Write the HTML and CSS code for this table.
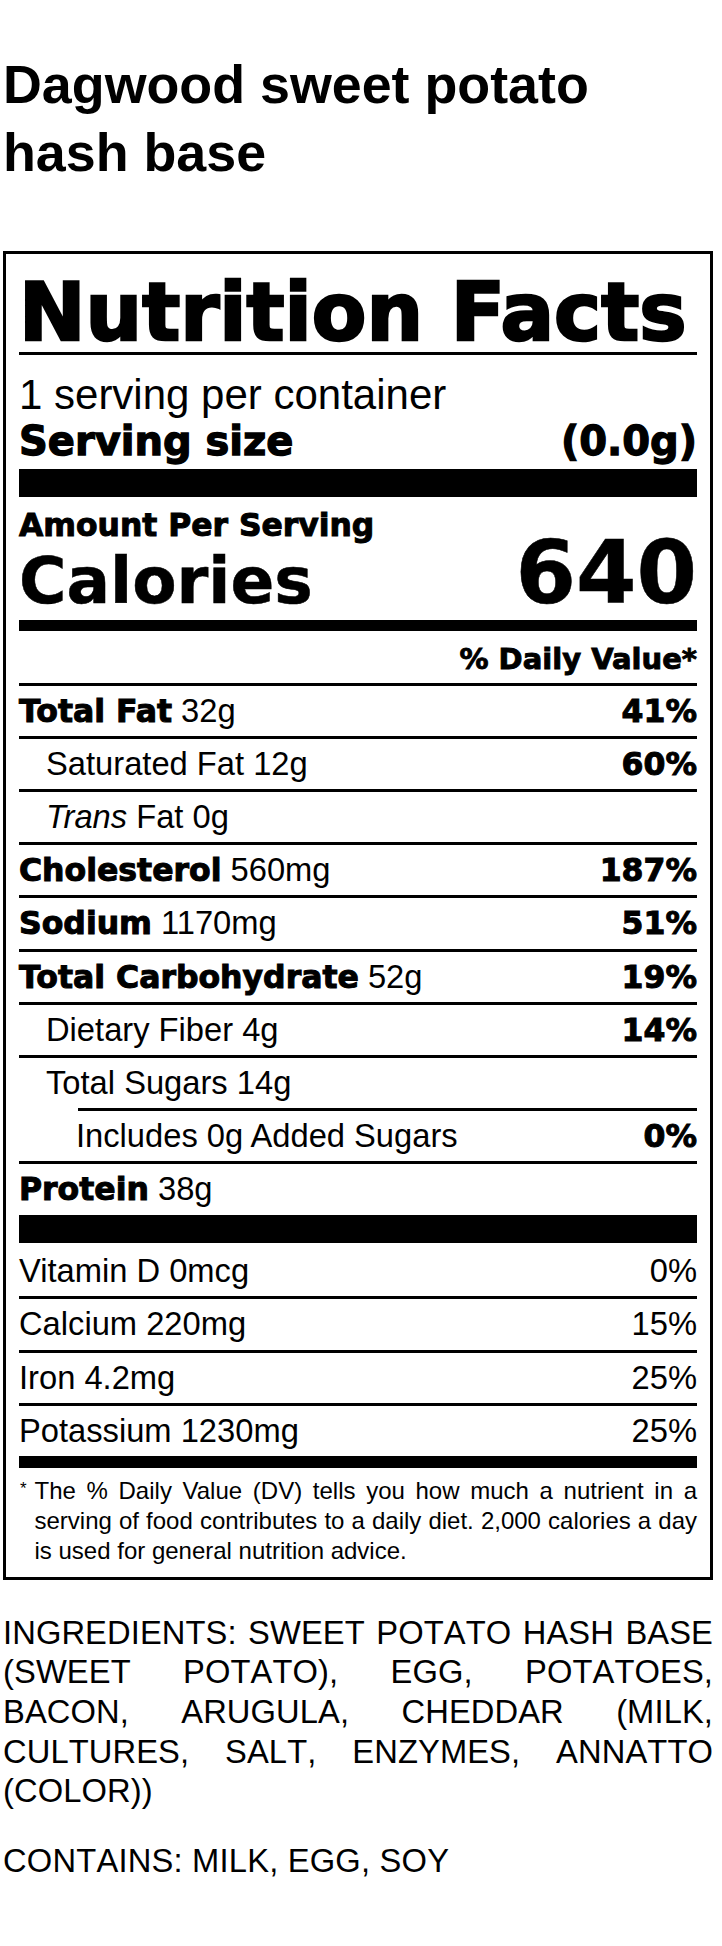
FILE: index.html
```html
<!DOCTYPE html>
<html lang="en">
<head>
<meta charset="utf-8">
<title>Dagwood sweet potato hash base</title>
<link rel="stylesheet" href="styles.css">
</head>
<body>
<div class="page">
  <h1 class="title">Dagwood sweet potato hash base</h1>
  <section class="label">
    <div class="nf-head heavy">Nutrition Facts</div>
    <div class="servings">1 serving per container</div>
    <div class="serving-size heavy"><span>Serving size</span><span>(0.0g)</span></div>
    <div class="bar bar-lg"></div>
    <div class="amount heavy">Amount Per Serving</div>
    <div class="calories heavy"><span class="cal-label">Calories</span><span class="cal-value">640</span></div>
    <div class="bar bar-md"></div>
    <div class="dv-head heavy">% Daily Value*</div>
    <div class="row"><span><b class="heavy">Total Fat</b> 32g</span><b class="heavy">41%</b></div>
    <div class="row indent"><span>Saturated Fat 12g</span><b class="heavy">60%</b></div>
    <div class="row indent"><span><i>Trans</i> Fat 0g</span></div>
    <div class="row"><span><b class="heavy">Cholesterol</b> 560mg</span><b class="heavy">187%</b></div>
    <div class="row"><span><b class="heavy">Sodium</b> 1170mg</span><b class="heavy">51%</b></div>
    <div class="row"><span><b class="heavy">Total Carbohydrate</b> 52g</span><b class="heavy">19%</b></div>
    <div class="row indent"><span>Dietary Fiber 4g</span><b class="heavy">14%</b></div>
    <div class="row indent"><span>Total Sugars 14g</span></div>
    <div class="row sub"><span>Includes 0g Added Sugars</span><b class="heavy">0%</b></div>
    <div class="row"><span><b class="heavy">Protein</b> 38g</span></div>
    <div class="bar bar-lg2"></div>
    <div class="row first"><span>Vitamin D 0mcg</span><span>0%</span></div>
    <div class="row"><span>Calcium 220mg</span><span>15%</span></div>
    <div class="row"><span>Iron 4.2mg</span><span>25%</span></div>
    <div class="row"><span>Potassium 1230mg</span><span>25%</span></div>
    <div class="bar bar-md2"></div>
    <div class="footnote"><span class="ast">*</span><p class="fn-text">The % Daily Value (DV) tells you how much a nutrient in a serving of food contributes to a daily diet. 2,000 calories a day is used for general nutrition advice.</p></div>
  </section>
  <p class="ingredients">INGREDIENTS: SWEET POTATO HASH BASE (SWEET POTATO), EGG, POTATOES, BACON, ARUGULA, CHEDDAR (MILK, CULTURES, SALT, ENZYMES, ANNATTO (COLOR))</p>
  <p class="contains">CONTAINS: MILK, EGG, SOY</p>
</div>
</body>
</html>
```

FILE: styles.css
```css
html, body {
  margin: 0;
  padding: 0;
  background: #fff;
  color: #000;
}

body {
  font-family: "Liberation Sans", Arial, Helvetica, sans-serif;
}

.page {
  width: 710px;
  margin-left: 3px;
}

.title {
  margin: 0;
  padding-top: 49.5px;
  font-size: 53.8px;
  line-height: 68px;
  font-weight: 700;
}

.heavy {
  font-family: "DejaVu Sans", Verdana, sans-serif;
  font-weight: 700;
  -webkit-text-stroke: 0.032em currentColor;
}

.label {
  margin-top: 65px;
  border: 3px solid #000;
  padding: 0 13px 11px;
}

.nf-head {
  font-size: 79.5px;
  line-height: 78px;
  padding-top: 20px;
  border-bottom: 3px solid #000;
  white-space: nowrap;
}

.servings {
  padding-top: 17px;
  font-size: 42px;
  line-height: 46px;
}

.serving-size {
  display: flex;
  justify-content: space-between;
  align-items: baseline;
  font-size: 40px;
  line-height: 46px;
}

.bar {
  background: #000;
}

.bar-lg {
  height: 28px;
  margin-top: 5px;
}

.amount {
  padding-top: 10px;
  font-size: 31.4px;
  line-height: 36.5px;
}

.calories {
  display: flex;
  justify-content: space-between;
  align-items: baseline;
}

.cal-label {
  font-size: 64.6px;
  line-height: 64.6px;
}

.cal-value {
  font-size: 87px;
  line-height: 60px;
}

.bar-md {
  height: 11px;
  margin-top: 6px;
}

.dv-head {
  text-align: right;
  padding-top: 4px;
  font-size: 29px;
  line-height: 48px;
}

.row {
  display: flex;
  justify-content: space-between;
  align-items: baseline;
  border-top: 3px solid #000;
  font-size: 32.7px;
  line-height: 50.2px;
}

.row .heavy {
  font-size: 31.5px;
}

.row.first {
  border-top: 0;
  padding-top: 3.5px;
}

.indent {
  padding-left: 27px;
}

.sub {
  margin-left: 59px;
}

.sub > span {
  margin-left: -2px;
}

.bar-lg2 {
  height: 28px;
}

.bar-md2 {
  height: 12px;
}

.footnote {
  display: flex;
  padding-top: 8px;
  font-size: 24px;
  line-height: 30px;
}

.ast {
  flex: 0 0 14.5px;
  font-size: 17px;
  line-height: 26px;
  padding-left: 1px;
}

.fn-text {
  margin: 0;
  flex: 1;
  text-align: justify;
}

.ingredients {
  margin: 32.7px 0 0;
  font-size: 32.7px;
  line-height: 39.7px;
  font-kerning: none;
  letter-spacing: 0.1px;
  text-align: justify;
}

.contains {
  margin: 30px 0 0;
  font-size: 32.7px;
  line-height: 39.7px;
  font-kerning: none;
  letter-spacing: 0.2px;
}
```
